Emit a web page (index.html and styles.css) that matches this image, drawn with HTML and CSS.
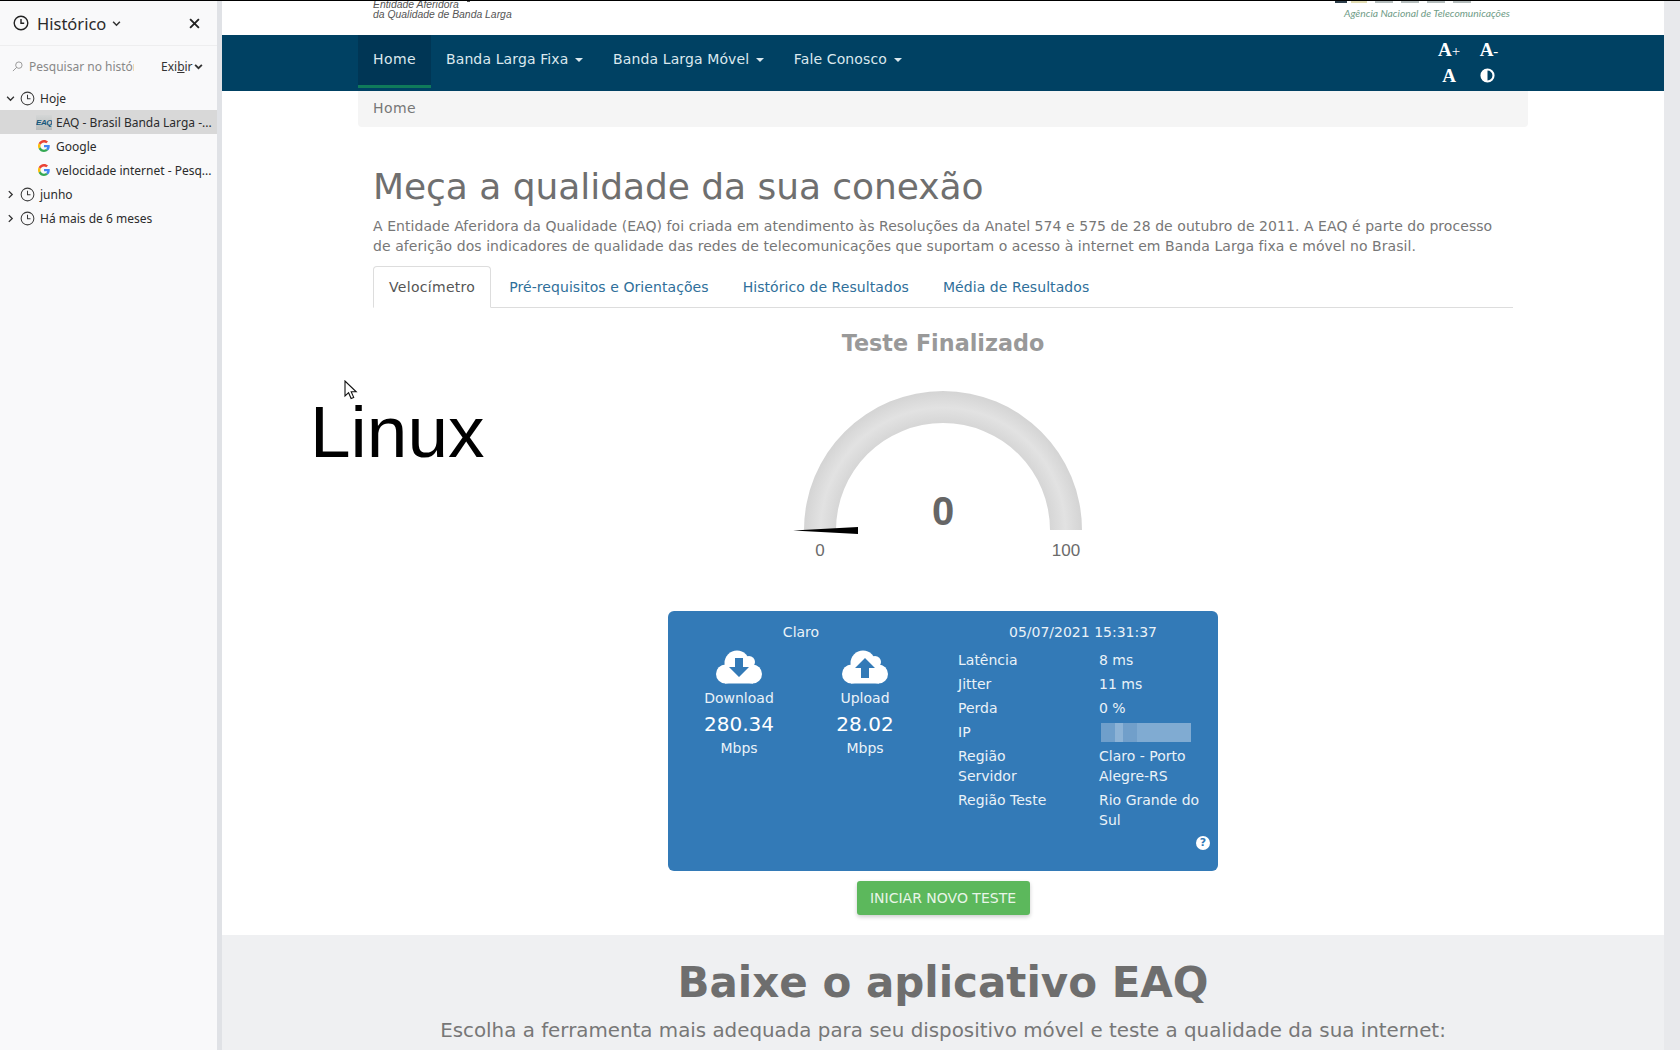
FILE: index.html
```html
<!DOCTYPE html>
<html lang="pt-BR">
  <head>
    <meta charset="UTF-8" />
    <title>EAQ - Brasil Banda Larga</title>
    <link rel="stylesheet" href="styles.css">
  </head>
  <body>
    <div class="window">
      <aside class="sidebar">
        <div class="side-head">
          <svg class="clock clock-big" viewBox="0 0 16 16"><circle cx="8" cy="8" r="6.8"/><path d="M8 4v4.3h3.2"/></svg>
          <span class="side-title">Histórico</span>
          <svg class="chev" viewBox="0 0 8 8"><path d="M1 2.5l3 3 3-3"/></svg>
          <svg class="close" viewBox="0 0 10 10"><path d="M1 1l8 8M9 1l-8 8"/></svg>
        </div>
        <div class="side-search">
          <svg class="lens" viewBox="0 0 12 12"><circle cx="7.5" cy="4.5" r="3.5"/><path d="M5 7l-4 4"/></svg>
          <input class="search-input" placeholder="Pesquisar no histórico">
          <span class="show-btn">Exi<u>b</u>ir</span>
          <svg class="chev chev-dark" viewBox="0 0 8 8"><path d="M1 2.5l3 3 3-3"/></svg>
        </div>
        <ul class="tree">
          <li class="tree-row">
            <svg class="twist" viewBox="0 0 8 8"><path d="M1 2.5l3 3 3-3"/></svg>
            <svg class="clock" viewBox="0 0 16 16"><circle cx="8" cy="8" r="6.8"/><path d="M8 4v4.3h3.2"/></svg>
            <span class="tree-group">Hoje</span>
          </li>
          <li class="tree-row tree-child selected">
            <span class="fav-eaq">EAQ</span>
            <span class="tree-label">EAQ - Brasil Banda Larga -...</span>
          </li>
          <li class="tree-row tree-child">
            <svg class="fav" viewBox="0 0 48 48"><path fill="#EA4335" d="M24 9.500c3.500 0 6.700 1.200 9.200 3.600l6.900-6.900C35.900 2.400 30.500 0 24 0 14.600 0 6.500 5.400 2.600 13.200l8 6.200C12.400 13.700 17.700 9.500 24 9.500z"/><path fill="#4285F4" d="M47 24.500c0-1.600-.1-3.100-.4-4.500H24v9h12.900c-.6 3-2.200 5.500-4.800 7.200l7.700 6C44.300 38 47 31.800 47 24.500z"/><path fill="#FBBC05" d="M10.500 28.600C10 27.200 9.800 25.600 9.800 24s.3-3.200.7-4.600l-8-6.200C1 16.400 0 20.100 0 24s1 7.600 2.600 10.800l7.900-6.200z"/><path fill="#34A853" d="M24 48c6.500 0 11.900-2.100 15.800-5.800l-7.700-6c-2.100 1.400-4.900 2.300-8.100 2.300-6.300 0-11.600-4.200-13.500-9.900l-8 6.200C6.500 42.600 14.600 48 24 48z"/></svg>
            <span class="tree-label">Google</span>
          </li>
          <li class="tree-row tree-child">
            <svg class="fav" viewBox="0 0 48 48"><path fill="#EA4335" d="M24 9.500c3.500 0 6.700 1.200 9.200 3.600l6.900-6.900C35.900 2.400 30.500 0 24 0 14.600 0 6.500 5.400 2.600 13.200l8 6.200C12.400 13.700 17.700 9.500 24 9.500z"/><path fill="#4285F4" d="M47 24.500c0-1.600-.1-3.100-.4-4.500H24v9h12.900c-.6 3-2.200 5.500-4.800 7.200l7.700 6C44.300 38 47 31.800 47 24.500z"/><path fill="#FBBC05" d="M10.500 28.600C10 27.200 9.800 25.600 9.800 24s.3-3.200.7-4.600l-8-6.200C1 16.400 0 20.100 0 24s1 7.600 2.600 10.800l7.900-6.200z"/><path fill="#34A853" d="M24 48c6.500 0 11.900-2.100 15.800-5.800l-7.700-6c-2.100 1.400-4.900 2.300-8.100 2.300-6.300 0-11.600-4.200-13.500-9.900l-8 6.200C6.500 42.600 14.600 48 24 48z"/></svg>
            <span class="tree-label">velocidade internet - Pesq...</span>
          </li>
          <li class="tree-row">
            <svg class="twist" viewBox="0 0 8 8"><path d="M2.500 1l3 3-3 3"/></svg>
            <svg class="clock" viewBox="0 0 16 16"><circle cx="8" cy="8" r="6.8"/><path d="M8 4v4.3h3.2"/></svg>
            <span class="tree-group">junho</span>
          </li>
          <li class="tree-row">
            <svg class="twist" viewBox="0 0 8 8"><path d="M2.500 1l3 3-3 3"/></svg>
            <svg class="clock" viewBox="0 0 16 16"><circle cx="8" cy="8" r="6.8"/><path d="M8 4v4.3h3.2"/></svg>
            <span class="tree-group">Há mais de 6 meses</span>
          </li>
        </ul>
      </aside>
      <div class="splitter"></div>

      <main class="page">
        <header class="brand container">
          <div class="brand-left">Entidade Aferidora<i class="brand-dot"></i><br>da Qualidade de Banda Larga</div>
          <div class="brand-right">
            <div class="anatel-cut"><i class="cut-dark"></i><i class="cut-yellow"></i><i></i><i></i><i></i><i></i></div>
            <div class="anatel-sub">Agência Nacional de Telecomunicações</div>
          </div>
        </header>

        <nav class="navbar">
          <div class="container nav-inner">
            <ul class="nav-list">
              <li class="nav-item active">Home</li>
              <li class="nav-item">Banda Larga Fixa <b class="caret"></b></li>
              <li class="nav-item">Banda Larga Móvel <b class="caret"></b></li>
              <li class="nav-item">Fale Conosco <b class="caret"></b></li>
            </ul>
            <div class="a11y">
              <span class="a-big">A<small>+</small></span>
              <span class="a-big">A<small>-</small></span>
              <span class="a-big">A</span>
              <svg class="contrast" viewBox="0 0 14 14"><circle cx="7" cy="7" r="5.6" fill="none" stroke="#fff" stroke-width="2"/><path d="M7 1a6 6 0 0 0 0 12z" fill="#fff"/></svg>
            </div>
          </div>
        </nav>

        <div class="container">
          <div class="breadcrumb">Home</div>
          <div class="content">
            <h1 class="main-title">Meça a qualidade da sua conexão</h1>
            <p class="intro">A Entidade Aferidora da Qualidade (EAQ) foi criada em atendimento às Resoluções da Anatel 574 e 575 de 28 de outubro de 2011. A EAQ é parte do processo de aferição dos indicadores de qualidade das redes de telecomunicações que suportam o acesso à internet em Banda Larga fixa e móvel no Brasil.</p>
            <ul class="tabs">
              <li class="tab active">Velocímetro</li>
              <li class="tab">Pré-requisitos e Orientações</li>
              <li class="tab">Histórico de Resultados</li>
              <li class="tab">Média de Resultados</li>
            </ul>
          </div>

          <section class="speed">
            <div class="os-name">Linux</div>
            <svg class="cursor" viewBox="0 0 14 20"><path d="M1 1v15l3.600-3.300 2.500 5.800 2.600-1.100-2.500-5.600h5z" fill="#fff" stroke="#111" stroke-width="1.100"/></svg>
            <h3 class="status">Teste Finalizado</h3>
            <svg class="gauge" width="300" height="170" viewBox="0 0 300 170">
              <defs>
                <radialGradient id="ring" gradientUnits="userSpaceOnUse" cx="150" cy="139" r="139">
                  <stop offset="0.77" stop-color="#d6d6d6"/>
                  <stop offset="0.88" stop-color="#e2e2e2"/>
                  <stop offset="1" stop-color="#d4d4d4"/>
                </radialGradient>
              </defs>
              <path d="M11 139a139 139 0 0 1 278 0h-32a107 107 0 0 0-214 0z" fill="url(#ring)"/>
              <path d="M0 139.500L65 136v7z" fill="#000"/>
              <text class="gauge-value" x="150" y="134" text-anchor="middle">0</text>
              <text class="gauge-label" x="27" y="165" text-anchor="middle">0</text>
              <text class="gauge-label" x="273" y="165" text-anchor="middle">100</text>
            </svg>

            <div class="result-card">
              <div class="result-left">
                <div class="card-head">Claro</div>
                <div class="rates">
                  <div class="rate">
                    <svg class="cloud" viewBox="0 0 46 34"><g fill="#fff"><circle cx="21" cy="13" r="12.500"/><circle cx="33" cy="12" r="6"/><circle cx="9.500" cy="24" r="9.500"/><circle cx="36.500" cy="24" r="9.500"/><rect x="9" y="18" width="28" height="15.500"/></g><path fill="#337ab7" d="M19 8h8v9h6l-10 10-10-10h6z"/></svg>
                    <div class="rate-name">Download</div>
                    <div class="rate-value">280.34</div>
                    <div class="rate-unit">Mbps</div>
                  </div>
                  <div class="rate">
                    <svg class="cloud" viewBox="0 0 46 34"><g fill="#fff"><circle cx="21" cy="13" r="12.500"/><circle cx="33" cy="12" r="6"/><circle cx="9.500" cy="24" r="9.500"/><circle cx="36.500" cy="24" r="9.500"/><rect x="9" y="18" width="28" height="15.500"/></g><path fill="#337ab7" d="M23 8l10 10h-6v10h-8V18h-6z"/></svg>
                    <div class="rate-name">Upload</div>
                    <div class="rate-value">28.02</div>
                    <div class="rate-unit">Mbps</div>
                  </div>
                </div>
              </div>
              <div class="result-right">
                <div class="card-head">05/07/2021 15:31:37</div>
                <dl class="details">
                  <dt>Latência</dt><dd>8 ms</dd>
                  <dt>Jitter</dt><dd>11 ms</dd>
                  <dt>Perda</dt><dd>0 %</dd>
                  <dt>IP</dt><dd><span class="ip-blur"></span></dd>
                  <dt>Região Servidor</dt><dd>Claro - Porto Alegre-RS</dd>
                  <dt>Região Teste</dt><dd>Rio Grande do Sul</dd>
                </dl>
                <div class="help-row"><span class="help">?</span></div>
              </div>
            </div>
            <button class="btn-new">INICIAR NOVO TESTE</button>
          </section>
        </div>

        <section class="app-band">
          <h2 class="app-title">Baixe o aplicativo EAQ</h2>
          <p class="app-sub">Escolha a ferramenta mais adequada para seu dispositivo móvel e teste a qualidade da sua internet:</p>
        </section>
      </main>

      <div class="scrollbar"></div>
    </div>
  </body>
</html>
```

FILE: styles.css
```css
* {
  box-sizing: border-box;
}
html,
body {
  margin: 0;
  height: 100%;
  overflow: hidden;
}
body {
  font-family: "DejaVu Sans", sans-serif;
  font-size: 14px;
  color: #777;
  background: #fff;
  border-top: 1px solid #000;
}
.window {
  display: flex;
  height: 1049px;
}

/* sidebar */
.sidebar {
  width: 217px;
  flex: none;
  background: #f9f9fa;
  font-family: "Noto Sans", sans-serif;
  color: #2b2b2b;
  font-size: 12px;
}
.side-head {
  height: 45px;
  display: flex;
  align-items: center;
  padding: 0 17px 0 13px;
  border-bottom: 1px solid #eeeeef;
}
.side-title {
  font-size: 16.5px;
  margin-left: 8px;
}
.clock {
  width: 15px;
  height: 15px;
  fill: none;
  stroke: #3a3a3a;
  stroke-width: 1.1;
  flex: none;
}
.clock-big {
  width: 16px;
  height: 16px;
  stroke: #222;
  stroke-width: 1.4;
}
.chev {
  width: 9px;
  height: 9px;
  fill: none;
  stroke: #333;
  stroke-width: 1.4;
  margin-left: 6px;
}
.close {
  width: 11px;
  height: 11px;
  fill: none;
  stroke: #222;
  stroke-width: 1.7;
  margin-left: auto;
}
.side-search {
  height: 40px;
  display: flex;
  align-items: center;
  padding-left: 12px;
  color: #888;
}
.lens {
  width: 11px;
  height: 11px;
  fill: none;
  stroke: #888;
  stroke-width: 0.9;
  flex: none;
}
.search-input {
  width: 105px;
  margin-left: 6px;
  padding: 0;
  border: 0;
  background: transparent;
  font-family: inherit;
  font-size: 12px;
}
.search-input::placeholder {
  color: #888;
  opacity: 1;
}
.show-btn {
  margin-left: 27px;
  color: #333;
}
.chev-dark {
  margin-left: 1px;
  stroke-width: 1.6;
}
.tree {
  list-style: none;
  margin: 0;
  padding: 0;
}
.tree-row {
  height: 24px;
  display: flex;
  align-items: center;
  padding-left: 6px;
  white-space: nowrap;
}
.twist {
  width: 9px;
  height: 9px;
  fill: none;
  stroke: #333;
  stroke-width: 1.2;
  margin-right: 5px;
  flex: none;
}
.tree-group {
  margin-left: 5px;
}
.tree-child {
  padding-left: 38px;
}
.tree-label {
  margin-left: 6px;
}
.selected {
  background: #d8d8d8;
}
.fav {
  width: 12px;
  height: 12px;
  flex: none;
}
.fav-eaq {
  width: 16px;
  height: 15px;
  margin-left: -2px;
  margin-right: -2px;
  flex: none;
  font: italic 700 8px/15px "Liberation Sans", sans-serif;
  letter-spacing: -0.5px;
  color: #14587c;
  background: linear-gradient(#d4d6d6, #b8bcbc);
  text-align: center;
  overflow: hidden;
}
.splitter {
  width: 5px;
  flex: none;
  background: #e0e2e6;
}
.scrollbar {
  width: 16px;
  flex: none;
  background: #e8e9ec;
}

/* page */
.page {
  flex: 1;
  min-width: 0;
  overflow: hidden;
}
.container {
  width: 1170px;
  margin: 0 auto;
}
.brand {
  height: 34px;
  display: flex;
  justify-content: space-between;
  padding: 0 15px;
  overflow: hidden;
}
.brand-left {
  font: italic 10.4px/10px "Liberation Sans", sans-serif;
  color: #555;
  margin-top: -2px;
}
.brand-dot {
  display: inline-block;
  width: 3px;
  height: 3px;
  margin-left: 8px;
  vertical-align: 6px;
  background: #555;
}
.brand-right {
  width: 175px;
  margin-right: 3px;
  text-align: right;
}
.anatel-cut {
  height: 2px;
  display: flex;
  gap: 8px;
}
.anatel-cut i {
  width: 18px;
  background: #b4bcbc;
}
.anatel-cut .cut-dark {
  width: 12px;
  background: #2c3e4a;
}
.anatel-cut .cut-yellow {
  width: 16px;
  margin-left: -4px;
  background: #e0dab0;
}
.anatel-sub {
  font: italic 10.3px/12px "Lato", sans-serif;
  color: #6f9c87;
  margin-top: 4px;
  white-space: nowrap;
}
.navbar {
  height: 56px;
  background: #004163;
}
.nav-inner {
  display: flex;
  justify-content: space-between;
}
.nav-list {
  list-style: none;
  margin: 0;
  padding: 0;
  display: flex;
}
.nav-item {
  height: 53px;
  padding: 15px 15px 0;
  line-height: 19px;
  letter-spacing: 0.12px;
  color: #dbe8ee;
}
.nav-item.active {
  background: #003655;
  border-bottom: 3px solid #0f7a5a;
  letter-spacing: 0.4px;
}
.caret {
  display: inline-block;
  width: 0;
  height: 0;
  margin-left: 2px;
  vertical-align: middle;
  border-top: 4px solid #dbe8ee;
  border-left: 4px solid transparent;
  border-right: 4px solid transparent;
}
.a11y {
  width: 80px;
  margin-right: 19px;
  display: grid;
  grid-template-columns: 1fr 1fr;
  grid-auto-rows: 25px;
  align-items: center;
  justify-items: center;
  padding-top: 3px;
}
.a-big {
  font: 700 19px/25px "Liberation Serif", serif;
  color: #fff;
}
.a-big small {
  font-size: 15px;
  font-weight: 400;
}
.contrast {
  width: 15px;
  height: 15px;
  margin-right: 3px;
}
.breadcrumb {
  height: 36px;
  padding: 7px 15px;
  background: #f5f5f5;
  border-radius: 0 0 4px 4px;
  line-height: 20px;
  letter-spacing: 0.4px;
  color: #777;
}
.content {
  padding: 0 15px;
}
.main-title {
  margin: 40px 0 0;
  font-size: 36px;
  font-weight: 400;
  line-height: 40px;
  letter-spacing: -0.05px;
  color: #6f6f6f;
}
.intro {
  margin: 9px 0 0;
  line-height: 20px;
  letter-spacing: 0.06px;
  color: #777;
}
.tabs {
  list-style: none;
  margin: 10px 0 0;
  padding: 0;
  display: flex;
  border-bottom: 1px solid #ddd;
  height: 42px;
}
.tab {
  padding: 11px 16px 0;
  margin-right: 2px;
  color: #2f6f9a;
  white-space: nowrap;
  line-height: 20px;
  letter-spacing: 0.07px;
}
.tab.active {
  color: #555;
  background: #fff;
  border: 1px solid #ddd;
  border-bottom-color: #fff;
  border-radius: 4px 4px 0 0;
  height: 42px;
  padding: 10px 15px 0;
  letter-spacing: 0.3px;
}

/* speed test */
.speed {
  position: relative;
  display: flex;
  flex-direction: column;
  align-items: center;
}
.os-name {
  position: absolute;
  left: -48px;
  top: 79px;
  font: 73px/90px "Liberation Sans", sans-serif;
  color: #000;
}
.cursor {
  position: absolute;
  left: -14px;
  top: 72px;
  width: 14px;
  height: 20px;
}
.status {
  margin: 22px 0 0;
  font-size: 22.3px;
  font-weight: 700;
  line-height: 26px;
  color: #999;
}
.gauge {
  margin-top: 35px;
  display: block;
}
.gauge-value {
  font: 700 40px "Liberation Sans", sans-serif;
  fill: #666;
}
.gauge-label {
  font: 17px "Liberation Sans", sans-serif;
  fill: #6b6b6b;
}
.result-card {
  width: 550px;
  height: 260px;
  margin-top: 50px;
  background: #337ab7;
  border-radius: 6px;
  color: #eaf2f8;
  display: grid;
  grid-template-columns: 266px 270px;
  column-gap: 14px;
}
.card-head {
  text-align: center;
  line-height: 20px;
  margin-top: 11px;
}
.rates {
  display: grid;
  grid-template-columns: 142px 110px;
  text-align: center;
  margin-top: 7px;
}
.cloud {
  display: block;
  width: 46px;
  height: 34px;
  margin: 1px auto 0;
}
.rate-name {
  margin-top: 4px;
  line-height: 20px;
}
.rate-value {
  font-size: 20px;
  line-height: 30px;
  padding-top: 1px;
  margin-bottom: -1px;
  color: #fff;
}
.rate-unit {
  line-height: 20px;
}
.details {
  display: grid;
  grid-template-columns: 141px 105px;
  margin: 8px 0 0 10px;
  line-height: 20px;
  row-gap: 4px;
}
.details dt,
.details dd {
  margin: 0;
}
.details dt {
  padding-right: 40px;
}
.ip-blur {
  display: block;
  width: 90px;
  height: 19px;
  margin: 1px 0 0 2px;
  background: linear-gradient(90deg, #6f9fcb 0 15%, #8db3d6 15% 25%, #719fca 25% 40%, #80abd2 40% 100%);
}
.help-row {
  display: flex;
  justify-content: flex-end;
  padding-right: 8px;
  margin-top: 6px;
}
.help {
  width: 14px;
  height: 14px;
  border-radius: 50%;
  background: #fff;
  color: #337ab7;
  font-size: 11px;
  font-weight: 700;
  line-height: 14px;
  text-align: center;
}
.btn-new {
  margin-top: 10px;
  width: 173px;
  height: 34px;
  border: 0;
  border-radius: 3px;
  background: #5cb85c;
  color: #e8f5e8;
  font-family: inherit;
  font-size: 14px;
  box-shadow: 0 2px 4px rgba(0, 0, 0, 0.2);
}
.app-band {
  margin-top: 20px;
  height: 200px;
  background: #eff0f2;
  text-align: center;
}
.app-title {
  margin: 0;
  padding-top: 23px;
  font-size: 42px;
  line-height: 50px;
  font-weight: 700;
  color: #6e6e6e;
}
.app-sub {
  margin: 11px 0 0;
  font-size: 19.85px;
  line-height: 24px;
  color: #777;
}
```
